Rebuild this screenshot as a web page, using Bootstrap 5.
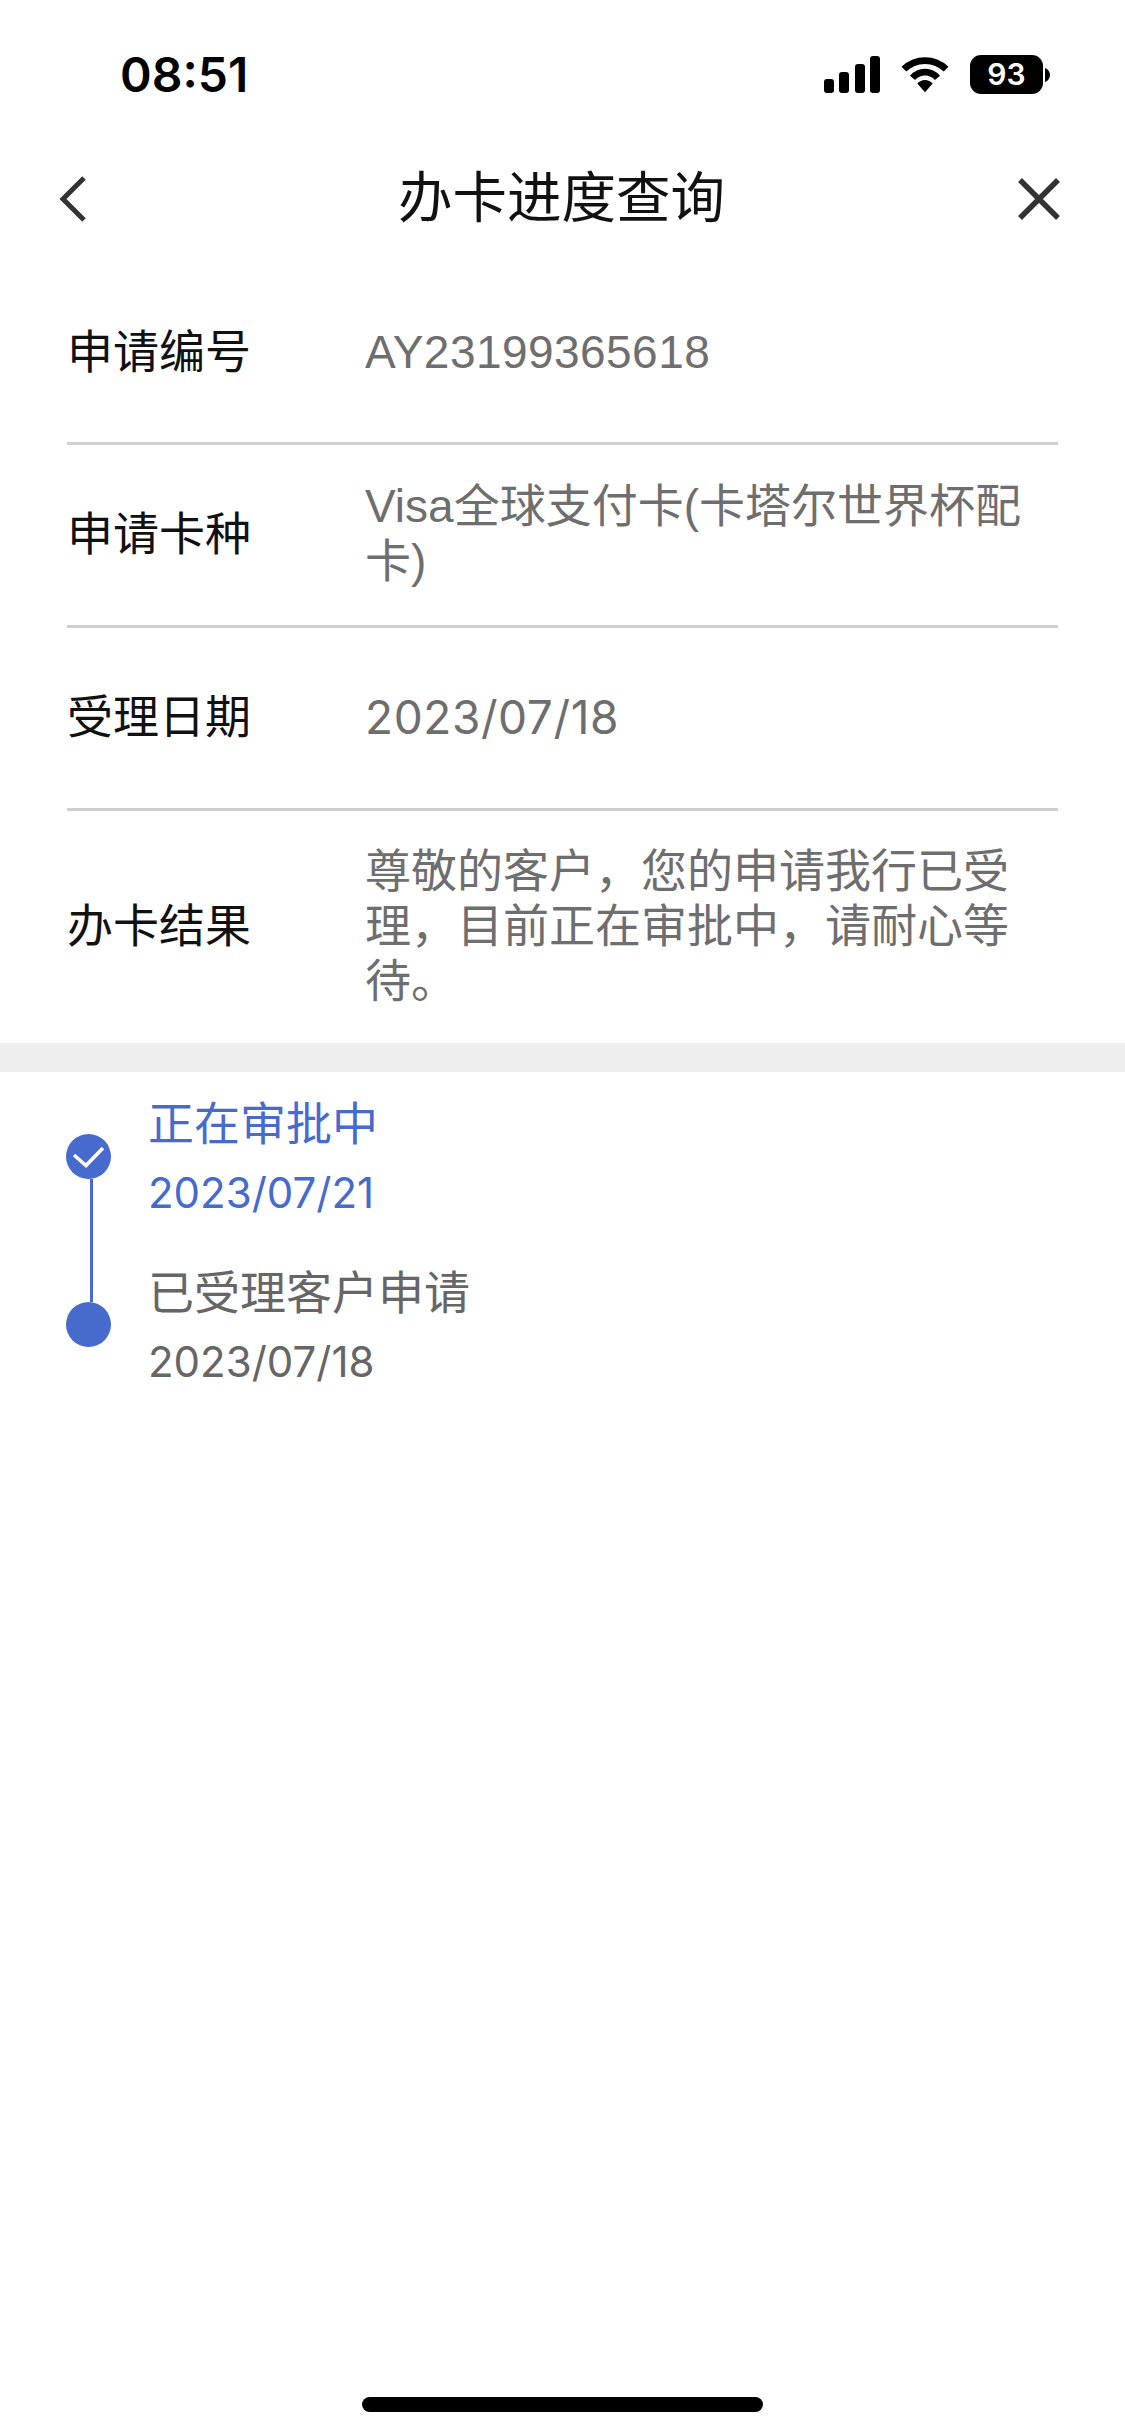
<!DOCTYPE html>
<html lang="zh-CN">
<head>
  <meta charset="UTF-8" />
  <meta name="viewport" content="width=device-width, initial-scale=1.0" />
  <title>办卡进度查询</title>
  <link href="https://cdn.jsdelivr.net/npm/bootstrap@5.3.0/dist/css/bootstrap.min.css" rel="stylesheet" />
  <style>
    body { background: #fff; font-family: "Liberation Sans", "Noto Sans CJK SC", sans-serif; width: 1125px; height: 2435px; overflow: hidden; position: relative; }
    .status-bar { height: 140px; padding: 50px 75px 0 120px; }
    .status-time { font-family: Inter, sans-serif; font-weight: 600; font-size: 48px; line-height: 50px; color: #000; }
    .status-icons { gap: 21px; padding-top: 5px; }
    .status-batt { width: 73px; height: 39px; background: #000; color: #fff; border-radius: 11px; font-family: Inter, sans-serif; font-weight: 600; font-size: 30px; line-height: 39px; text-align: center; }
    .batt-nub { margin-left: 2px; }
    .title-bar { height: 118px; padding: 0 64px 0 57px; }
    .title-side { width: 46px; flex: none; }
    .title-text { font-size: 54.5px; line-height: 60px; color: #111; padding-left: 5px; }
    .info-list { padding: 0 67px; }
    .info-row { border-bottom: 3px solid #cfcfcf; height: 183px; padding-bottom: 2px; }
    .info-row:first-child { height: 187px; padding-top: 6px; }
    .info-row:last-child { border-bottom: 0; height: 232px; }
    .info-label { width: 298px; flex: none; font-size: 46px; line-height: 56px; color: #111; }
    .info-value { font-size: 46px; line-height: 55px; color: #6e6e6e; word-break: break-all; padding-right: 20px; }
    .value-id { letter-spacing: .45px; }
    .value-date { font-family: Inter, sans-serif; letter-spacing: .6px; }
    .gray-band { height: 29px; background: #eeeeee; }
    .steps { padding: 22px 0 0 66px; }
    .step-line { width: 46px; flex: none; position: relative; }
    .dot { width: 45px; height: 45px; border-radius: 50%; background: #466bcd; position: absolute; left: 0; }
    .dot svg { display: block; }
    .dot-first { top: 40px; }
    .dot-second { top: 208px; }
    .rail { position: absolute; left: 24px; top: 85px; height: 123px; width: 3px; background: #466bcd; }
    .step-item { padding-left: 36px; height: 169px; padding-top: 2px; }
    .step-name { font-size: 46px; line-height: 56px; }
    .step-date { font-family: Inter, sans-serif; font-size: 42px; line-height: 52px; margin-top: 15px; }
    .tone-blue { color: #466bcd; }
    .tone-gray { color: #666; }
    .home-bar { position: absolute; left: 362px; top: 2397px; width: 401px; height: 15px; border-radius: 8px; background: #000; }
  </style>
</head>
<body>
  <div class="status-bar d-flex justify-content-between align-items-start">
    <div class="status-time">08:51</div>
    <div class="status-icons d-flex align-items-center">
      <svg width="56" height="37" viewBox="0 0 56 37"><rect x="0" y="23" width="10" height="14" rx="3"/><rect x="15" y="16" width="10" height="21" rx="3"/><rect x="31" y="8" width="10" height="29" rx="3"/><rect x="46" y="0" width="10" height="37" rx="3"/></svg>
      <svg width="48" height="37" viewBox="0 0 50 37"><path d="M3 13 C15 1 35 1 47 13" fill="none" stroke="#000" stroke-width="7"/><path d="M12 22 C19 14 31 14 38 22" fill="none" stroke="#000" stroke-width="7"/><path d="M17 28 C21 23 29 23 33 28 L25 37 Z"/></svg>
      <div class="d-flex align-items-center">
        <div class="status-batt">93</div>
        <svg width="5" height="14" viewBox="0 0 5 14" class="batt-nub"><path d="M0 0 C3 1 5 4 5 7 C5 10 3 13 0 14 Z"/></svg>
      </div>
    </div>
  </div>
  <div class="title-bar d-flex align-items-center">
    <div class="title-side"><svg width="30" height="46" viewBox="0 0 30 46"><path d="M27 2 L6 23 L27 44" fill="none" stroke="#333" stroke-width="5"/></svg></div>
    <div class="title-text flex-fill text-center">办卡进度查询</div>
    <div class="title-side d-flex justify-content-end"><svg width="44" height="44" viewBox="0 0 44 44"><path d="M3 3 L41 41 M41 3 L3 41" fill="none" stroke="#333" stroke-width="5.5"/></svg></div>
  </div>
  <div class="info-list">
    <div class="info-row d-flex align-items-center">
      <div class="info-label">申请编号</div>
      <div class="info-value value-id">AY23199365618</div>
    </div>
    <div class="info-row d-flex align-items-center">
      <div class="info-label">申请卡种</div>
      <div class="info-value">Visa全球支付卡(卡塔尔世界杯配卡)</div>
    </div>
    <div class="info-row d-flex align-items-center">
      <div class="info-label">受理日期</div>
      <div class="info-value value-date">2023/07/18</div>
    </div>
    <div class="info-row d-flex align-items-center">
      <div class="info-label">办卡结果</div>
      <div class="info-value">尊敬的客户，您的申请我行已受理，目前正在审批中，请耐心等待。</div>
    </div>
  </div>
  <div class="gray-band"></div>
  <div class="steps d-flex">
    <div class="step-line">
      <div class="rail"></div>
      <div class="dot dot-first">
        <svg width="45" height="45" viewBox="0 0 45 45"><path d="M8 21 L20 31.5 L37 14" fill="none" stroke="#fff" stroke-width="3.5"/></svg>
      </div>
      <div class="dot dot-second"></div>
    </div>
    <div>
      <div class="step-item tone-blue">
        <div class="step-name">正在审批中</div>
        <div class="step-date">2023/07/21</div>
      </div>
      <div class="step-item tone-gray">
        <div class="step-name">已受理客户申请</div>
        <div class="step-date">2023/07/18</div>
      </div>
    </div>
  </div>
  <div class="home-bar"></div>
  <script src="https://cdn.jsdelivr.net/npm/bootstrap@5.3.0/dist/js/bootstrap.bundle.min.js"></script>
</body>
</html>
